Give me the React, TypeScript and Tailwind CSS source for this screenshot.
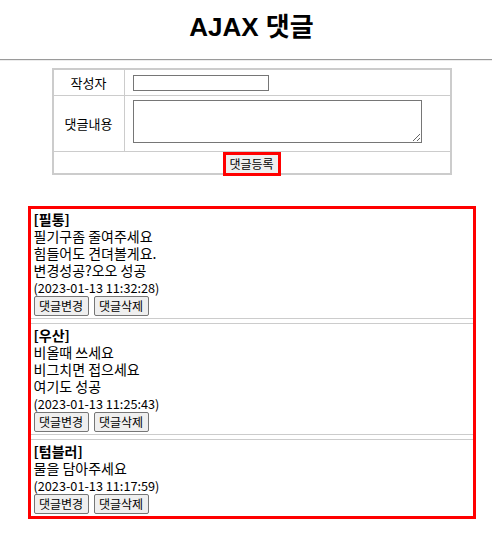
import React from "react";

const KR = '"Noto Sans CJK KR", "Liberation Sans", sans-serif';

type C = { name: string; lines: string[]; date: string };
const comments: C[] = [
  { name: "[필통]", lines: ["필기구좀 줄여주세요", "힘들어도 견뎌볼게요.", "변경성공?오오 성공"], date: "(2023-01-13 11:32:28)" },
  { name: "[우산]", lines: ["비올때 쓰세요", "비그치면 접으세요", "여기도 성공"], date: "(2023-01-13 11:25:43)" },
  { name: "[텀블러]", lines: ["물을 담아주세요"], date: "(2023-01-13 11:17:59)" },
];

function SmallBtn({ children }: { children: React.ReactNode }) {
  return (
    <button className="h-[20px] w-[55px] rounded-[2px] border border-[#767676] bg-[#efefef] text-[12px] leading-[18px] text-black">
      {children}
    </button>
  );
}

export default function App() {
  return (
    <div className="min-h-[554px] w-[492px] bg-white text-black" style={{ fontFamily: KR }}>
      <div className="h-[59px] pl-[11px] pt-[12px] text-center">
        <h1 className="text-[26px] font-bold leading-[30px]" style={{ fontFamily: '"Liberation Sans", "Noto Sans CJK KR", sans-serif' }}>
          AJAX 댓글
        </h1>
      </div>
      <div className="h-[2px] border-t border-b border-t-[#9a9a9a] border-b-[#ececec]" />
      <div className="pl-[11px] pt-[7px]">
        <div className="mx-auto w-[400px] border-2 border-[#cccccc] text-[13px]">
          <div className="flex h-[26px] border-b border-[#cccccc]">
            <div className="flex w-[71px] items-center justify-center border-r border-[#cccccc]">작성자</div>
            <div className="flex items-start pl-[8px] pt-[5px]">
              <input className="h-[16px] w-[136px] border border-[#767676] bg-white" />
            </div>
          </div>
          <div className="flex h-[56px] border-b border-[#cccccc]">
            <div className="flex w-[71px] items-center justify-center border-r border-[#cccccc]">댓글내용</div>
            <div className="flex items-start pl-[8px] pt-[4px]">
              <textarea className="h-[43px] w-[289px] border border-[#767676] bg-white" />
            </div>
          </div>
          <div className="flex h-[21px] items-start justify-center">
            <button className="h-[24px] w-[58px] border-[3px] border-[#ff0000] bg-[#efefef] text-[12px] leading-[16px] text-black">
              댓글등록
            </button>
          </div>
        </div>
      </div>
      <div className="pl-[11px] pt-[31px]">
        <div className="mx-auto w-[448px] border-[3px] border-[#ff0000] text-[14px] leading-[17px]">
          {comments.map((c, i) => (
            <React.Fragment key={i}>
              {i > 0 && <div className="h-[6px] border-y border-[#cccccc]" />}
              <div className={(i === 0 ? "pt-[2px]" : "pt-[3px]") + " pb-[2px] pl-[3px]"}>
                <div className="font-bold">{c.name}</div>
                {c.lines.map((l, j) => (
                  <div key={j}>{l}</div>
                ))}
                <div className="text-[12.7px]">{c.date}</div>
                <div className="flex gap-[5px]">
                  <SmallBtn>댓글변경</SmallBtn>
                  <SmallBtn>댓글삭제</SmallBtn>
                </div>
              </div>
            </React.Fragment>
          ))}
        </div>
      </div>
    </div>
  );
}
